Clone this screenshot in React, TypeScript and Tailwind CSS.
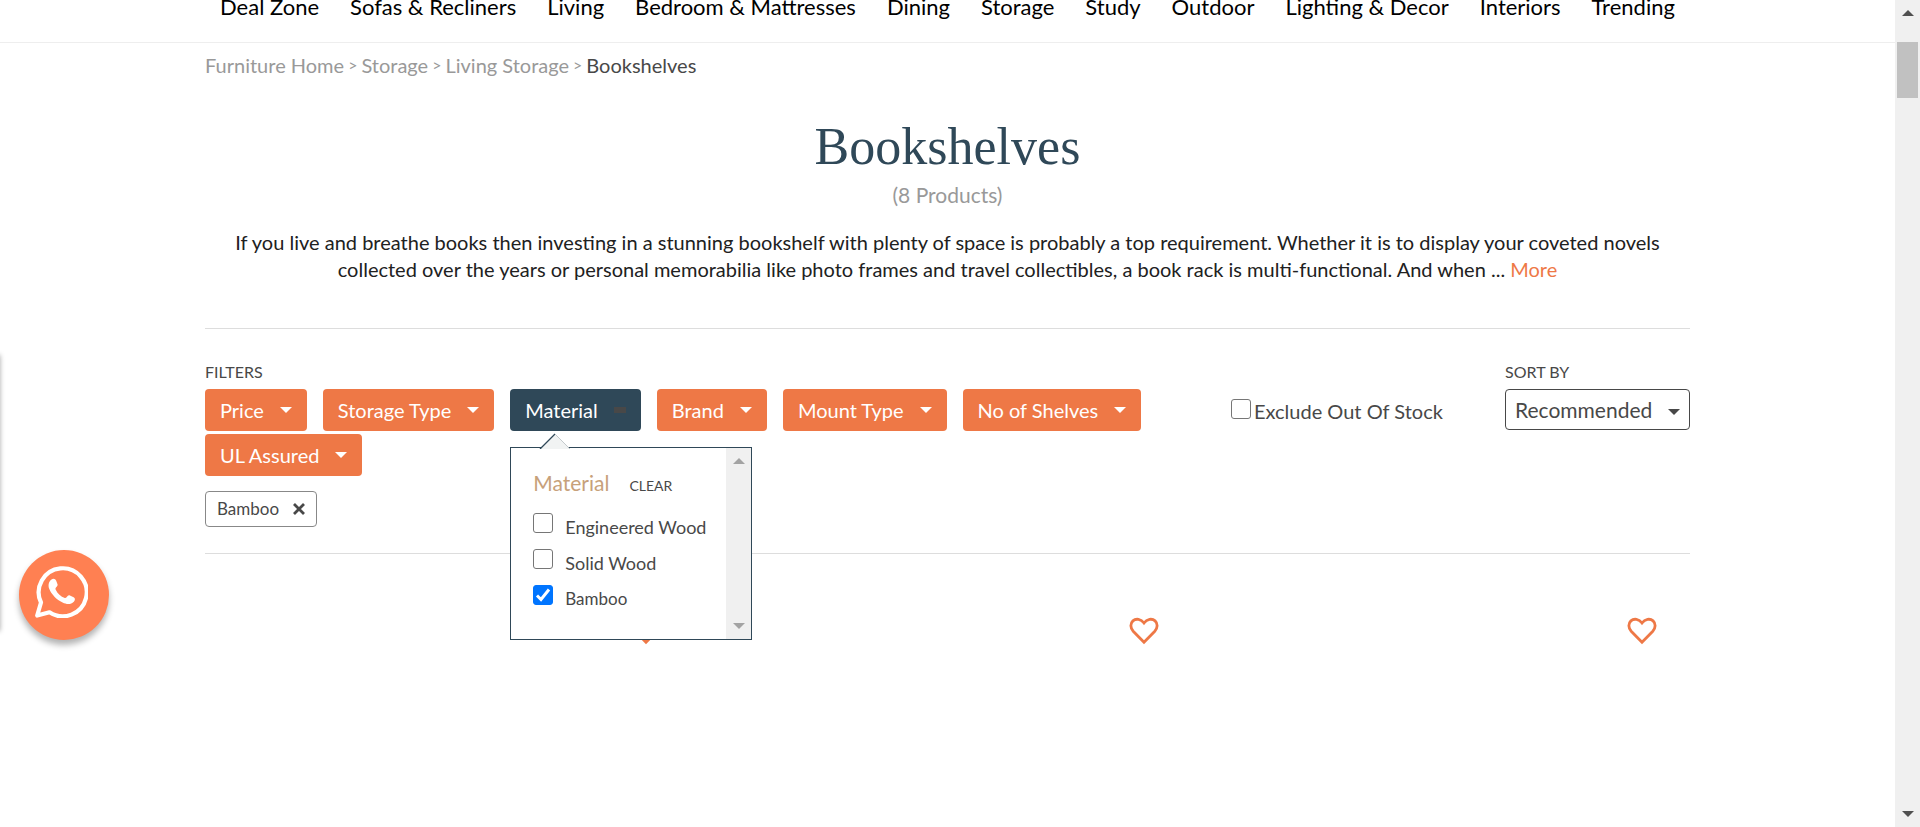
const navItems = [
  "Deal Zone",
  "Sofas & Recliners",
  "Living",
  "Bedroom & Mattresses",
  "Dining",
  "Storage",
  "Study",
  "Outdoor",
  "Lighting & Decor",
  "Interiors",
  "Trending",
];

const filters = [
  { label: "Price" },
  { label: "Storage Type" },
  { label: "Material", open: true },
  { label: "Brand" },
  { label: "Mount Type" },
  { label: "No of Shelves" },
  { label: "UL Assured" },
];

const materials = [
  { label: "Engineered Wood", checked: false },
  { label: "Solid Wood", checked: false },
  { label: "Bamboo", checked: true },
];

function Triangle({ up = false, className }: { up?: boolean; className: string }) {
  return (
    <svg viewBox="0 0 12 6" preserveAspectRatio="none" className={className} aria-hidden="true">
      <path d={up ? "M0 6L6 0L12 6Z" : "M0 0L6 6L12 0Z"} fill="currentColor" />
    </svg>
  );
}

function Checkbox({ id, checked = false }: { id: string; checked?: boolean }) {
  return (
    <span className="relative block size-5 shrink-0">
      <input
        id={id}
        type="checkbox"
        defaultChecked={checked}
        className="peer block size-5 appearance-none rounded-[3px] border border-[#767676] bg-white checked:border-[#0075ff] checked:bg-[#0075ff]"
      />
      <svg viewBox="0 0 20 20" className="pointer-events-none absolute inset-0 hidden size-5 peer-checked:block" aria-hidden="true">
        <path d="M4 10.5L8 14.5L16 4.5" fill="none" stroke="#fff" strokeWidth="3" />
      </svg>
    </span>
  );
}

function MaterialPanel() {
  return (
    <div className="absolute top-full left-0 z-10 mt-4 flex h-[193px] w-[242px] border border-[#2f4858] bg-white">
      <svg viewBox="0 0 32 16" className="absolute -top-[15px] left-7 h-4 w-8" aria-hidden="true">
        <path d="M1 16L16 1L31 16Z" fill="#f1f3f3" />
        <path d="M1 16L16 1" stroke="#2f4858" strokeWidth="1.3" />
        <path d="M16 1L31 16" stroke="#b5bcc0" strokeWidth="0.8" />
      </svg>
      <div className="flex-1 pt-[23px] pl-[22px]">
        <div className="flex items-baseline gap-5">
          <span className="text-[21px] leading-6 text-[#c7a17a]">Material</span>
          <button type="button" className="text-[14px] leading-6 text-[#484848]">CLEAR</button>
        </div>
        <ul className="mt-[15px]">
          {materials.map((m) => (
            <li key={m.label} className="flex h-9 items-start gap-3">
              <Checkbox id={m.label} checked={m.checked} />
              <label
                htmlFor={m.label}
                className={
                  m.checked
                    ? "pt-1 text-[17px] leading-5 whitespace-nowrap"
                    : "pt-1 text-[18px] leading-5 whitespace-nowrap"
                }
              >
                {m.label}
              </label>
            </li>
          ))}
        </ul>
      </div>
      <div className="flex w-[25px] flex-col items-center justify-between bg-[#f0f0f0] py-[10px] text-[#a3a3a3]">
        <Triangle up className="h-[6px] w-3" />
        <Triangle className="h-[6px] w-3" />
      </div>
    </div>
  );
}

function HeartButton() {
  return (
    <button type="button" aria-label="Add to wishlist" className="block">
      <svg viewBox="0 0 30 28" className="h-7 w-[30px]" fill="none" stroke="#ee7846" strokeWidth="2.8" aria-hidden="true">
        <path d="M15 25.2L4.2 14.2C1.2 11 1.1 6.5 3.9 3.9C7 1.1 12 1.9 15 6C18 1.9 23 1.1 26.1 3.9C28.9 6.5 28.8 11 25.8 14.2Z" />
      </svg>
    </button>
  );
}

export default function App() {
  return (
    <div className="flex h-screen overflow-hidden bg-white font-['Lato',sans-serif] text-[#484848]">
      <div className="min-w-0 flex-1">
        <header className="h-[43px] border-b border-[#eeeeee]">
          <nav className="mx-auto flex w-full max-w-[1485px] justify-between px-[15px] text-[22px] leading-[14px] text-black">
            {navItems.map((n) => (
              <a key={n} href="#" className="whitespace-nowrap">{n}</a>
            ))}
          </nav>
        </header>

        <main className="mx-auto w-full max-w-[1485px]">
          <nav aria-label="Breadcrumb" className="flex gap-1 pt-[10px] text-[20px] leading-6 text-[#999999]">
            <a href="#">Furniture Home</a>
            <span className="text-[16px]">&gt;</span>
            <a href="#">Storage</a>
            <span className="text-[16px]">&gt;</span>
            <a href="#">Living Storage</a>
            <span className="text-[16px]">&gt;</span>
            <span className="text-[#484848]">Bookshelves</span>
          </nav>

          <section className="border-b border-[#dddddd] pb-[45px] text-center">
            <h1 className="pt-10 font-['Liberation_Serif',serif] text-[52px] leading-[60px] text-[#2f4858]">Bookshelves</h1>
            <p className="mt-[6px] text-[21px] leading-6 text-[#999999]">(8 Products)</p>
            <p className="mt-[22px] text-[20px] leading-[27px] text-[#212121]">
              If you live and breathe books then investing in a stunning bookshelf with plenty of space is probably a top requirement. Whether it is to display your coveted novels
              <br />
              collected over the years or personal memorabilia like photo frames and travel collectibles, a book rack is multi-functional. And when ...{" "}
              <a href="#" className="text-[#ee7846]">More</a>
            </p>
          </section>

          <section className="flex border-b border-[#dddddd] pt-8 pb-[26px]">
            <div className="flex-1">
              <h2 className="text-[16px] leading-[22px]">FILTERS</h2>
              <div className="mt-[6px] flex flex-wrap gap-x-4 gap-y-[3px]">
                {filters.map((f) => (
                  <div key={f.label} className="relative">
                    <button
                      type="button"
                      className={
                        f.open
                          ? "flex h-[42px] items-center gap-4 rounded bg-[#2f4858] px-[15px] text-[20px] text-white"
                          : "flex h-[42px] items-center gap-4 rounded bg-[#ee7846] px-[15px] text-[20px] text-white"
                      }
                    >
                      {f.label}
                      {f.open ? <span className="h-[6px] w-3 bg-[#484848]" /> : <Triangle className="h-[6px] w-3" />}
                    </button>
                    {f.open && <MaterialPanel />}
                  </div>
                ))}
              </div>
              <button type="button" className="mt-[15px] flex h-9 items-center gap-[14px] rounded border border-[#888888] px-[11px] text-[17px]">
                Bamboo
                <svg viewBox="0 0 12 12" className="size-3" aria-hidden="true">
                  <path d="M1 1L11 11M11 1L1 11" stroke="#484848" strokeWidth="2.8" />
                </svg>
              </button>
            </div>
            <div className="flex w-[274px] items-start gap-[3px] pt-[38px]">
              <Checkbox id="exclude" />
              <label htmlFor="exclude" className="text-[20px] leading-6 whitespace-nowrap">Exclude Out Of Stock</label>
            </div>
            <div className="w-[185px]">
              <label htmlFor="sort" className="block text-[16px] leading-[22px]">SORT BY</label>
              <div className="relative mt-[6px]">
                <select id="sort" className="block h-[41px] w-full appearance-none rounded border border-[#484848] bg-white pl-[9px] text-[21px]">
                  <option>Recommended</option>
                </select>
                <Triangle className="pointer-events-none absolute top-5 right-[10px] h-[6px] w-3" />
              </div>
            </div>
          </section>

          <section className="grid grid-cols-3 gap-[9px] pt-[63px]">
            {["a", "b", "c"].map((k) => (
              <article key={k} className="flex justify-end pr-[33px]">
                <HeartButton />
              </article>
            ))}
          </section>
        </main>
      </div>

      <div className="flex w-[25px] shrink-0 flex-col items-center bg-[#f0f0f0] py-[10px] text-[#505050]">
        <Triangle up className="h-[6px] w-3" />
        <div className="mt-[26px] h-14 w-[21px] bg-[#c1c1c1]" />
        <Triangle className="mt-auto h-[6px] w-3" />
      </div>

      <div className="fixed top-[355px] -left-2 h-[276px] w-2 shadow-[0_0_5px_rgba(0,0,0,0.35)]" />

      <a
        href="#"
        aria-label="Chat on WhatsApp"
        className="fixed top-[550px] left-[19px] flex size-[90px] rounded-full bg-[#ff8052] pt-[15px] pl-4 shadow-[0_5px_6px_rgba(0,0,0,0.3)]"
      >
        <svg viewBox="0 0 53 53" className="size-[53px]" aria-hidden="true">
          <path
            d="M2.2 50.5L6 37.5A24 24 0 1 1 14.5 47.3Z"
            fill="none"
            stroke="#fff"
            strokeWidth="4.2"
            strokeLinejoin="round"
          />
          <path
            d="M16.5 14.5C18.5 13.2 20.5 14 21.2 15.8L22.6 19.4C23 21.4 19.8 22.4 20.6 24.4C22.6 28.6 25.8 31.6 29.8 33C31.6 33.4 32.4 29.6 34.4 30.2L38.6 32.2C40.6 33.2 40 35.4 38.8 36.8C36 39.8 31.6 39.6 27.6 37.6C21.4 34.6 16.6 29.6 14.2 23.8C12.8 20 13.8 16.4 16.5 14.5Z"
            fill="#fff"
          />
        </svg>
      </a>
    </div>
  );
}
